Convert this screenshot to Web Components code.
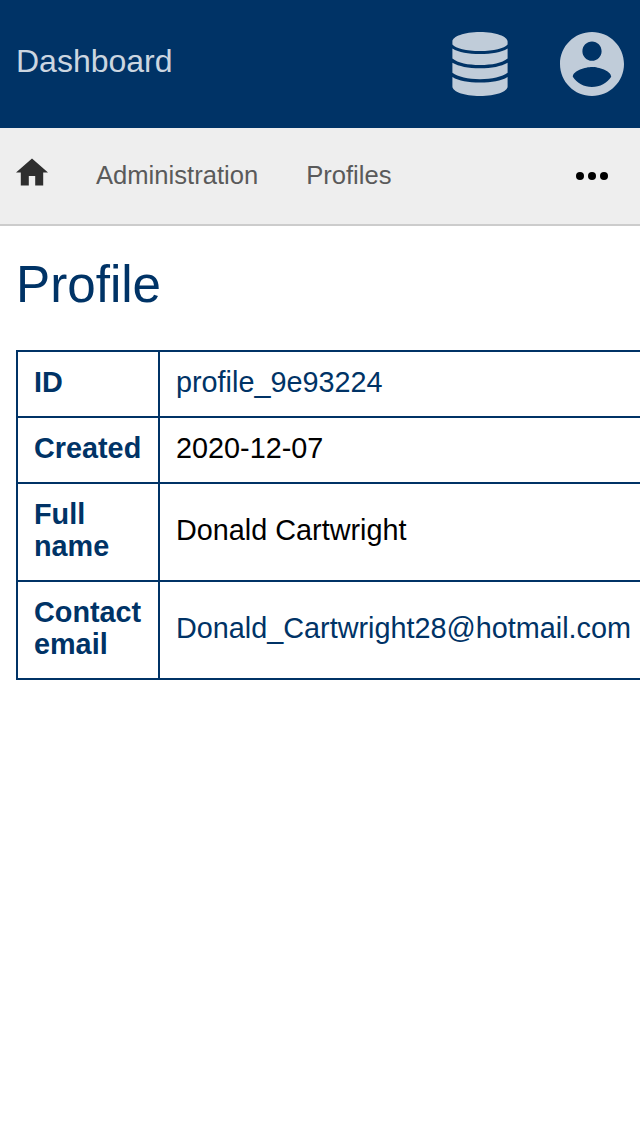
<!DOCTYPE html>
<html lang="en"><head><meta charset="utf-8"><title>Profile</title>
<style>html,body{margin:0;background:#fff}body{font-family:"Liberation Sans",Arial,sans-serif;overflow:hidden;height:1136px}</style></head>
<body>
<profile-page></profile-page>
<script>
const define = (name, html) => customElements.define(name, class extends HTMLElement {
  constructor(){ super(); this.attachShadow({mode:'open'}).innerHTML = html; }
});
define('app-header', `<style>
:host{display:flex;align-items:center;height:128px;box-sizing:border-box;padding:0 16px;background:#003366;color:#ccd6e0}
.title{flex:1;font-size:32px;line-height:36px;padding-bottom:6px}
svg{display:block;fill:#c0ccd9}
.db{margin-right:52px}
</style><div class="title"><slot></slot></div>
<svg class="db" width="56" height="64" viewBox="0 0 56 64"><path d="M28 0C44 0 55.6 4.5 55.6 9.5V12.5C52 16.5 42 19 28 19S4 16.5.4 12.5V9.5C.4 4.5 12 0 28 0zM.4 16.5C7 20.5 16 22 28 22S49 20.5 55.6 16.5V26.5C50 31 40 33 28 33S6 31 .4 26.5zM.4 30.8C7 34.5 16 36.3 28 36.3S49 34.5 55.6 30.8V40.8C50 45 40 47.2 28 47.2S6 45 .4 40.8zM.4 45C7 49 16 50.5 28 50.5S49 49 55.6 45V54.5C55.6 59.5 44 64 28 64S.4 59.5.4 54.5z"/></svg>
<svg width="64" height="64" viewBox="2 2 20 20"><path d="M12 2C6.48 2 2 6.48 2 12s4.48 10 10 10 10-4.48 10-10S17.52 2 12 2zm0 3c1.66 0 3 1.34 3 3s-1.34 3-3 3-3-1.34-3-3 1.34-3 3-3zm0 14.2c-2.5 0-4.71-1.28-6-3.22.03-1.99 4-3.08 6-3.08 1.99 0 5.97 1.09 6 3.08-1.29 1.94-3.5 3.22-6 3.22z"/></svg>`);
define('crumb-bar', `<style>
:host{display:flex;align-items:center;height:98px;box-sizing:border-box;padding:0 32px 0 16px;background:#eee;border-bottom:2px solid #ccc;color:#5a5a5a;font-size:25.6px}
svg{display:block}.home{margin-right:48px;margin-top:-8px}.more{margin-left:auto}
nav{display:flex;gap:48px;line-height:30px;padding-bottom:2px}
</style><svg class="home" width="32" height="28" viewBox="0 0 32 28"><path fill="#2e2e2e" d="M16 .4 0 14.6h4.8v13h8v-9.6h6.4v9.6h8v-13H32z"/></svg>
<nav><slot></slot></nav>
<svg class="more" width="32" height="8" viewBox="0 0 32 8"><circle cx="4" cy="4" r="4"/><circle cx="16" cy="4" r="4"/><circle cx="28" cy="4" r="4"/></svg>`);
define('detail-row', `<style>
:host{display:grid;grid-template-columns:142px 489px;border:solid #003366;border-width:0 2px 2px 0;font-size:28.8px;line-height:32px}
b,div{padding:14px 16px 18px;border-left:2px solid #003366;display:flex;align-items:center}
b{color:#003366}::slotted(a){color:#003366}
</style><b><slot name="label"></slot></b><div><slot></slot></div>`);
define('detail-table', `<style>:host{display:block;width:633px;border-top:2px solid #003366}</style><slot></slot>`);
define('profile-page', `<style>
:host{display:block}
main{padding:0 16px;margin-top:27px}
h1{margin:0 0 33px;font-weight:400;font-size:51.2px;line-height:64px;color:#003366}
</style><app-header>Dashboard</app-header>
<crumb-bar><span>Administration</span><span>Profiles</span></crumb-bar>
<main><h1>Profile</h1><detail-table>
<detail-row><span slot="label">ID</span><a>profile_9e93224</a></detail-row>
<detail-row><span slot="label">Created</span><span>2020-12-07</span></detail-row>
<detail-row><span slot="label">Full<br>name</span><span>Donald Cartwright</span></detail-row>
<detail-row><span slot="label">Contact<br>email</span><a>Donald_Cartwright28@hotmail.com</a></detail-row>
</detail-table></main>`);
</script></body></html>
